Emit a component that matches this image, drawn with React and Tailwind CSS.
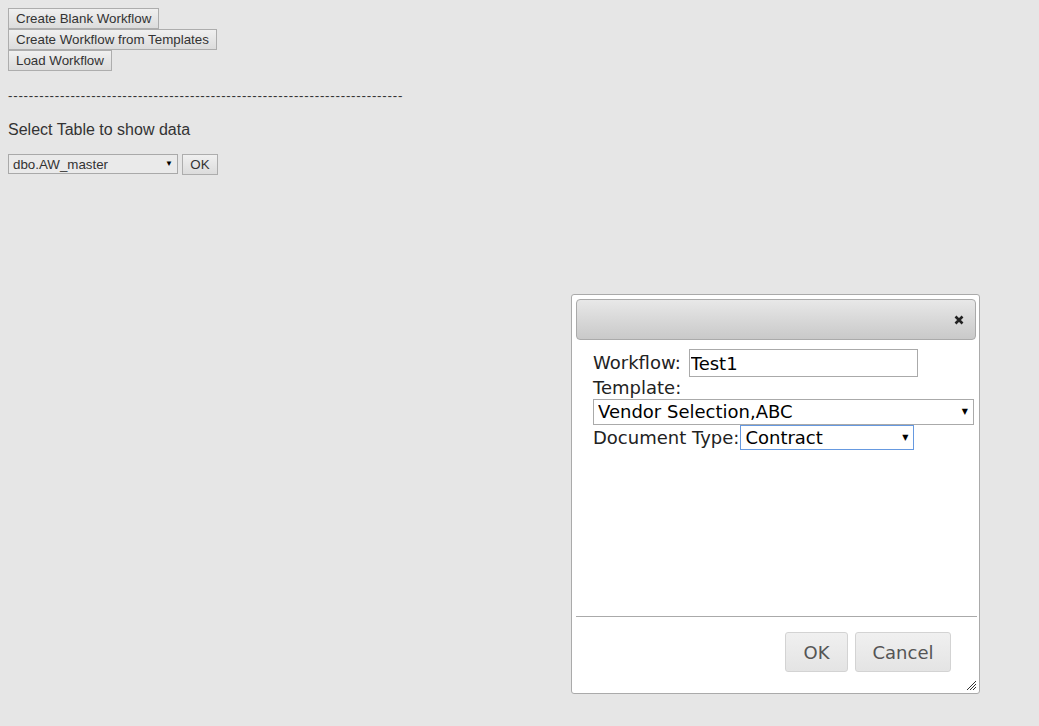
import React from 'react';

const pageBtn =
  'block h-[21px] px-[7px] border border-[#adadad] bg-gradient-to-b from-[#f0f0f0] to-[#dcdcdc] text-[13.33px] leading-none text-[#333]';

function Caret({ className = '' }) {
  return (
    <span className={`pointer-events-none absolute top-1/2 -translate-y-1/2 text-[8px] text-black ${className}`}>
      ▼
    </span>
  );
}

export default function App() {
  return (
    <div className="relative min-h-[726px] w-full bg-[#e6e6e6] font-['Liberation_Sans',Arial,sans-serif] text-[#333]">
      {/* Page content */}
      <div className="p-2">
        <button className={pageBtn}>Create Blank Workflow</button>
        <button className={pageBtn}>Create Workflow from Templates</button>
        <button className={pageBtn}>Load Workflow</button>

        <p className="mt-[18px] text-[13.33px] leading-none tracking-[0.76px] text-[#333]">
          ----------------------------------------------------------------------------
        </p>

        <p className="mt-[20px] text-base leading-none text-[#333]">Select Table to show data</p>

        <div className="mt-[14px] flex items-center gap-1">
          <div className="relative">
            <select className="h-[20px] w-[170px] appearance-none border border-[#a9a9a9] bg-[#eaeaea] pl-1 text-[13.33px] text-[#333]">
              <option>dbo.AW_master</option>
            </select>
            <Caret className="right-[5px]" />
          </div>
          <button className="h-[21px] w-[36px] border border-[#adadad] bg-gradient-to-b from-[#f0f0f0] to-[#dcdcdc] text-[13.33px] leading-none text-[#333]">
            OK
          </button>
        </div>
      </div>

      {/* Dialog */}
      <div className="absolute left-[571px] top-[294px] flex h-[400px] w-[409px] flex-col rounded-[3px] border border-[#aaa] bg-white pb-1 pl-1 pr-[3px] pt-1 font-['DejaVu_Sans',Verdana,sans-serif]">
        <div className="flex h-[41px] items-center justify-end rounded-[4px] border border-[#aaa] bg-gradient-to-b from-[#e8e8e8] to-[#c9c9c9] pr-[11px]">
          <svg width="10" height="10" viewBox="0 0 10 10">
            <path d="M1.5 1.5 L8.5 8.5 M8.5 1.5 L1.5 8.5" stroke="#222" strokeWidth="2.6" strokeLinecap="butt" />
          </svg>
        </div>

        <div className="flex-1 px-[17px] pt-[9px] text-[18px] leading-none text-[#222]">
          <div className="flex items-center">
            <span>Workflow:</span>
            <input
              defaultValue="Test1"
              className="ml-[8px] h-[28px] w-[229px] border border-[#aaa] px-[1px] text-[18px] text-black outline-none"
            />
          </div>
          <div className="h-[22px] pt-[2px]">Template:</div>
          <div className="relative -mr-[1px] w-[381px]">
            <select className="h-[26px] w-full appearance-none border border-[#aaa] bg-white pl-1 text-[18px] text-black">
              <option>Vendor Selection,ABC</option>
            </select>
            <Caret className="right-[6px]" />
          </div>
          <div className="flex items-center">
            <span>Document Type:</span>
            <div className="relative ml-[1px]">
              <select className="h-[25px] w-[174px] appearance-none border border-[#6699e0] bg-white pl-1 text-[18px] text-black">
                <option>Contract</option>
              </select>
              <Caret className="right-[6px]" />
            </div>
          </div>
        </div>

        <div className="-mr-[1px] border-t border-[#aaa] pb-[17px] pl-[23px] pr-[26px] pt-[15px]">
          <div className="flex justify-end gap-[7px]">
            <button className="h-[40px] w-[63px] rounded-[3px] border border-[#d3d3d3] bg-gradient-to-b from-[#f0f0f0] to-[#e4e4e4] text-[18px] text-[#555]">
              OK
            </button>
            <button className="h-[40px] w-[96px] rounded-[3px] border border-[#d3d3d3] bg-gradient-to-b from-[#f0f0f0] to-[#e4e4e4] text-[18px] text-[#555]">
              Cancel
            </button>
          </div>
        </div>

        <svg className="absolute bottom-[2px] right-[2px]" width="12" height="12" viewBox="0 0 12 12">
          <path d="M11 2 L2 11 M11 5 L5 11 M11 8 L8 11" stroke="#333" strokeWidth="1" />
        </svg>
      </div>
    </div>
  );
}
